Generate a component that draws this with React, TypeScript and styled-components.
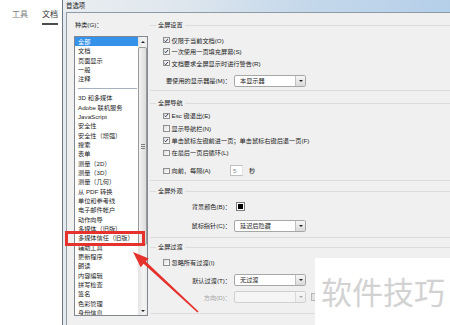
import React from "react";
import styled, { createGlobalStyle } from "styled-components";

const FONT = `"Liberation Sans", "Noto Sans CJK SC", sans-serif`;

const Global = createGlobalStyle`
  html, body { margin: 0; padding: 0; background: #fff; }
  body { font-family: ${FONT}; }
  * { box-sizing: border-box; }
`;

const Screen = styled.div`
  position: relative;
  width: 450px;
  height: 325px;
  overflow: hidden;
  display: flex;
  background: #fff;
  font-family: ${FONT};
  color: #1e1e1e;
`;

/* ---------- left app pane ---------- */
const SidePane = styled.div`
  width: 62px;
  flex: none;
  background: #fff;
  padding-top: 10px;
`;
const Tabs = styled.div`
  display: flex;
  gap: 14px;
  padding-left: 12px;
`;
const Tab = styled.div<{ $active?: boolean }>`
  font-size: 8px;
  line-height: 10px;
  height: 15px;
  padding-bottom: 3px;
  color: ${(p) => (p.$active ? "#333" : "#7a7a7a")};
  border-bottom: 2px solid ${(p) => (p.$active ? "#4d4d4d" : "transparent")};
  white-space: nowrap;
`;

/* ---------- dialog ---------- */
const Dialog = styled.div`
  flex: 1;
  display: flex;
  flex-direction: column;
  border-left: 1px solid #6f7782;
  background: #e3e9ef;
`;
const TitleBar = styled.div`
  height: 12px;
  flex: none;
  padding-left: 3px;
  font-size: 6.4px;
  line-height: 11px;
  color: #202020;
  background: linear-gradient(90deg, #e9edf1 0%, #dfe7ee 30%, #c6d9eb 60%, #b5cfe9 100%);
`;
const Body = styled.div`
  flex: 1;
  display: flex;
  margin-left: 3px;
  border-left: 1px solid #8e99a6;
  border-top: 1px solid #8e99a6;
  background: #f0f0f0;
`;

/* ---------- categories ---------- */
const CategoryPane = styled.div`
  width: 83px;
  flex: none;
  padding: 7px 0 0 7px;
  display: flex;
  flex-direction: column;
`;
const PaneLabel = styled.div`
  font-size: 6.2px;
  line-height: 10px;
  height: 10px;
  padding-left: 1px;
  white-space: nowrap;
`;
const ListBox = styled.div`
  margin-top: 6px;
  width: 74px;
  height: 280px;
  border: 1px solid #828790;
  background: #fff;
  display: flex;
  overflow: hidden;
`;
const Items = styled.div`
  flex: 1;
  display: flex;
  flex-direction: column;
  overflow: hidden;
`;
const Item = styled.div<{ $selected?: boolean }>`
  flex: none;
  height: 9.35px;
  line-height: 9.35px;
  font-size: 6.2px;
  padding-left: 3px;
  white-space: nowrap;
  color: ${(p) => (p.$selected ? "#fff" : "#1e1e1e")};
  background: ${(p) => (p.$selected ? "#3592ea" : "transparent")};
`;
const Separator = styled.div`
  flex: none;
  height: 9.5px;
  display: flex;
  align-items: center;
  padding: 0 1px 0 3px;
  &::after {
    content: "";
    flex: 1;
    height: 1px;
    background: #a6b1c0;
  }
`;
const ScrollBar = styled.div`
  width: 9px;
  flex: none;
  display: flex;
  flex-direction: column;
  background: linear-gradient(90deg, #e4e4e4, #f3f3f3 60%, #ebebeb);
`;
const ScrollButton = styled.div`
  height: 9px;
  flex: none;
  display: flex;
  align-items: center;
  justify-content: center;
`;
const Arrow = styled.span<{ $down?: boolean }>`
  width: 0;
  height: 0;
  border-left: 2px solid transparent;
  border-right: 2px solid transparent;
  ${(p) => (p.$down ? "border-top: 2px solid #222;" : "border-bottom: 2px solid #222;")}
`;
const Thumb = styled.div`
  height: 198px;
  flex: none;
  margin-top: 1px;
  border: 1px solid #9a9a9a;
  border-radius: 2px;
  background: linear-gradient(90deg, #f3f3f3, #dcdcdc);
  display: flex;
  flex-direction: column;
  align-items: center;
  justify-content: center;
  gap: 1px;
`;
const Grip = styled.span`
  width: 4px;
  height: 1px;
  background: #7c7c7c;
`;
const Track = styled.div`
  flex: 1;
`;

/* ---------- settings ---------- */
const SettingsPane = styled.div`
  flex: 1;
  padding-top: 12px;
  display: flex;
  flex-direction: column;
`;
const Section = styled.section<{ $gap?: number; $pad: number }>`
  margin-top: ${(p) => p.$gap ?? 0}px;
  padding-bottom: ${(p) => p.$pad}px;
  border-top: 1px solid #dcdcdc;
  border-bottom: 1px solid #dcdcdc;
  display: flex;
  flex-direction: column;
  align-items: flex-start;
`;
const Heading = styled.h3`
  margin: -6px 0 0 6px;
  padding: 0 2px;
  height: 10px;
  line-height: 10px;
  font-size: 6.2px;
  font-weight: normal;
  color: #222;
  background: #f0f0f0;
  white-space: nowrap;
`;
const CheckRow = styled.div<{ $h: number; $mt?: number }>`
  height: ${(p) => p.$h}px;
  margin-top: ${(p) => p.$mt ?? 0}px;
  padding-left: 13px;
  display: flex;
  align-items: center;
  gap: 2px;
  font-size: 6.2px;
  white-space: nowrap;
`;
const Box = styled.span`
  width: 6.5px;
  height: 6.5px;
  flex: none;
  border: 1px solid #8f8f8f;
  background: linear-gradient(135deg, #dedede, #fff);
  display: inline-flex;
  align-items: center;
  justify-content: center;
`;
const FormRow = styled.div<{ $mt: number }>`
  height: 12px;
  margin-top: ${(p) => p.$mt}px;
  display: grid;
  grid-template-columns: 81px auto auto;
  column-gap: 3px;
  align-items: center;
  font-size: 6.2px;
`;
const FieldLabel = styled.span<{ $disabled?: boolean }>`
  text-align: right;
  white-space: nowrap;
  color: ${(p) => (p.$disabled ? "#a3a3a3" : "#1e1e1e")};
`;
const Select = styled.div<{ $disabled?: boolean }>`
  width: 72px;
  height: 12px;
  border: 1px solid ${(p) => (p.$disabled ? "#d0d0d0" : "#a7a7a7")};
  border-radius: 2px;
  background: ${(p) => (p.$disabled ? "#f5f5f5" : "#fff")};
  display: flex;
  overflow: hidden;
`;
const SelectText = styled.span`
  flex: 1;
  padding-left: 5px;
  line-height: 10px;
  white-space: nowrap;
`;
const SelectButton = styled.span<{ $disabled?: boolean }>`
  width: 10px;
  flex: none;
  border-left: 1px solid ${(p) => (p.$disabled ? "#dadada" : "#c2c2c2")};
  background: ${(p) =>
    p.$disabled ? "linear-gradient(#f7f7f7, #ececec)" : "linear-gradient(#f7f7f7, #d9d9d9)"};
  display: flex;
  align-items: center;
  justify-content: center;
`;
const Caret = styled.span<{ $disabled?: boolean }>`
  width: 0;
  height: 0;
  border-left: 2px solid transparent;
  border-right: 2px solid transparent;
  border-top: 2px solid ${(p) => (p.$disabled ? "#a8a8a8" : "#222")};
`;
const SideButton = styled.span`
  width: 8px;
  height: 8px;
  margin-left: 2px;
  border: 1px solid #b8b8b8;
  background: #e2e2e2;
`;
const Swatch = styled.span`
  width: 9px;
  height: 9px;
  margin-left: 2px;
  border: 1px solid #7a7a7a;
  padding: 1px;
  background: #fff;
  display: flex;
  &::after {
    content: "";
    flex: 1;
    background: #000;
  }
`;
const SpinRow = styled.div`
  height: 11px;
  margin-top: 6.45px;
  display: grid;
  grid-template-columns: 74px 13px auto;
  column-gap: 6px;
  align-items: center;
  font-size: 6.2px;
`;
const SpinCheck = styled.div`
  padding-left: 13px;
  display: flex;
  align-items: center;
  gap: 2px;
  white-space: nowrap;
`;
const SpinBox = styled.span`
  height: 11px;
  border: 1px solid #c0c0c0;
  border-right-color: #e2e2e2;
  background: #fff;
  color: #8a8a8a;
  padding-left: 2px;
  line-height: 9px;
`;

/* ---------- overlays ---------- */
const Highlight = styled.div`
  position: absolute;
  left: 65px;
  top: 230.5px;
  width: 80px;
  height: 15px;
  border: 3px solid #e6322d;
`;
const ArrowLayer = styled.svg`
  position: absolute;
  left: 0;
  top: 0;
  pointer-events: none;
`;
const Watermark = styled.div`
  position: absolute;
  right: 0;
  bottom: 0;
  width: 135px;
  height: 67px;
  background: #fff;
  display: flex;
  align-items: center;
  padding: 0 0 2px 6px;
  font-family: "Noto Sans CJK SC", sans-serif;
  font-size: 31px;
  color: #d2d2d2;
  white-space: nowrap;
`;

const Check = ({ checked }: { checked?: boolean }) => (
  <Box>
    {checked && (
      <svg width="5" height="5" viewBox="0 0 5 5">
        <path d="M0.6 2.6 L1.9 3.9 L4.4 0.9" fill="none" stroke="#2c3a55" strokeWidth="1.1" />
      </svg>
    )}
  </Box>
);

const topItems = ["全部", "文档", "页面显示", "一般", "注释"];
const moreItems = [
  "3D 和多媒体",
  "Adobe 联机服务",
  "JavaScript",
  "安全性",
  "安全性（增强）",
  "搜索",
  "表单",
  "测量（2D）",
  "测量（3D）",
  "测量（几何）",
  "从 PDF 转换",
  "单位和参考线",
  "电子邮件帐户",
  "动作向导",
  "多媒体（旧版）",
  "多媒体信任（旧版）",
  "辅助工具",
  "更新程序",
  "朗读",
  "内容编辑",
  "拼写检查",
  "签名",
  "色彩管理",
  "身份信息",
];

export default function App() {
  return (
    <Screen>
      <Global />
      <SidePane>
        <Tabs>
          <Tab>工具</Tab>
          <Tab $active>文档</Tab>
        </Tabs>
      </SidePane>
      <Dialog>
        <TitleBar>首选项</TitleBar>
        <Body>
          <CategoryPane>
            <PaneLabel>种类(G)：</PaneLabel>
            <ListBox>
              <Items>
                {topItems.map((t, i) => (
                  <Item key={t} $selected={i === 0}>
                    {t}
                  </Item>
                ))}
                <Separator />
                {moreItems.map((t) => (
                  <Item key={t}>{t}</Item>
                ))}
              </Items>
              <ScrollBar>
                <ScrollButton>
                  <Arrow />
                </ScrollButton>
                <Thumb>
                  <Grip />
                  <Grip />
                  <Grip />
                </Thumb>
                <Track />
                <ScrollButton>
                  <Arrow $down />
                </ScrollButton>
              </ScrollBar>
            </ListBox>
          </CategoryPane>
          <SettingsPane>
            <Section $pad={3.5}>
              <Heading>全屏设置</Heading>
              <CheckRow $h={11.5} $mt={4.25}>
                <Check checked />
                仅限于当前文档(O)
              </CheckRow>
              <CheckRow $h={11.5}>
                <Check checked />
                一次使用一页填充屏幕(S)
              </CheckRow>
              <CheckRow $h={11.5}>
                <Check checked />
                文档要求全屏显示时进行警告(R)
              </CheckRow>
              <FormRow $mt={5.75}>
                <FieldLabel>要使用的显示器是(M)：</FieldLabel>
                <Select>
                  <SelectText>本显示器</SelectText>
                  <SelectButton>
                    <Caret />
                  </SelectButton>
                </Select>
              </FormRow>
            </Section>
            <Section $gap={12} $pad={3.5}>
              <Heading>全屏导航</Heading>
              <CheckRow $h={12.3} $mt={1.85}>
                <Check checked />
                Esc 键退出(E)
              </CheckRow>
              <CheckRow $h={12.3}>
                <Check />
                显示导航栏(N)
              </CheckRow>
              <CheckRow $h={12.3}>
                <Check checked />
                单击鼠标左键前进一页；单击鼠标右键后退一页(F)
              </CheckRow>
              <CheckRow $h={12.3}>
                <Check />
                在最后一页后循环(L)
              </CheckRow>
              <SpinRow>
                <SpinCheck>
                  <Check />
                  向前，每隔(A)
                </SpinCheck>
                <SpinBox>5</SpinBox>
                <span>秒</span>
              </SpinRow>
            </Section>
            <Section $gap={10} $pad={5.5}>
              <Heading>全屏外观</Heading>
              <FormRow $mt={4.5}>
                <FieldLabel>背景颜色(B)：</FieldLabel>
                <Swatch />
              </FormRow>
              <FormRow $mt={7.5}>
                <FieldLabel>鼠标指针(C)：</FieldLabel>
                <Select>
                  <SelectText>延迟后隐藏</SelectText>
                  <SelectButton>
                    <Caret />
                  </SelectButton>
                </Select>
              </FormRow>
            </Section>
            <Section $gap={9} $pad={10}>
              <Heading>全屏过渡</Heading>
              <CheckRow $h={10} $mt={5}>
                <Check />
                忽略所有过渡(I)
              </CheckRow>
              <FormRow $mt={7}>
                <FieldLabel>默认过渡(T)：</FieldLabel>
                <Select>
                  <SelectText>无过渡</SelectText>
                  <SelectButton>
                    <Caret />
                  </SelectButton>
                </Select>
              </FormRow>
              <FormRow $mt={5}>
                <FieldLabel $disabled>方向(D)：</FieldLabel>
                <Select $disabled>
                  <SelectText />
                  <SelectButton $disabled>
                    <Caret $disabled />
                  </SelectButton>
                </Select>
                <SideButton />
              </FormRow>
            </Section>
          </SettingsPane>
        </Body>
      </Dialog>

      <Highlight />
      <ArrowLayer width="450" height="325" viewBox="0 0 450 325">
        <polygon
          points="133,252 148.8,258.4 145.8,261.5 198.6,311.4 197.4,312.6 143.6,263.8 140.7,267.2"
          fill="#e6322d"
        />
      </ArrowLayer>
      <Watermark>软件技巧</Watermark>
    </Screen>
  );
}
